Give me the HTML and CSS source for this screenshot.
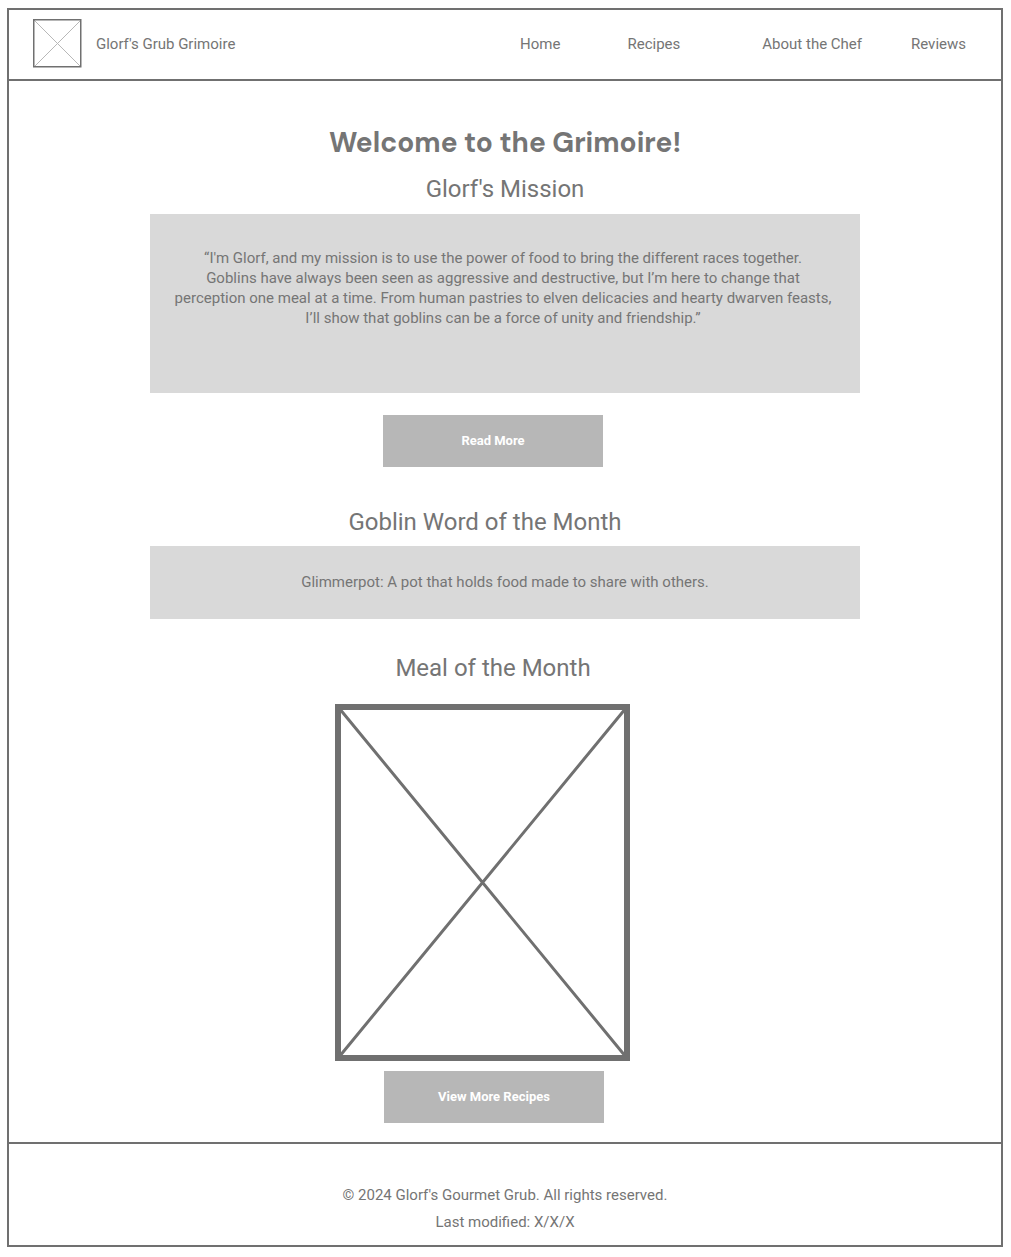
FILE: index.html
```html
<!DOCTYPE html>
<html lang="en">
<head>
<meta charset="utf-8">
<meta name="viewport" content="width=device-width, initial-scale=1">
<title>Glorf's Grub Grimoire</title>
<link rel="stylesheet" href="styles.css">
</head>
<body>
<div class="page">
  <header class="site-header">
    <svg class="logo" viewBox="0 0 49 49" aria-hidden="true">
      <path d="M1 1L48 48M48 1L1 48" stroke="#b8b8b8" fill="none"/>
      <rect x="0.75" y="0.75" width="47" height="47" fill="none" stroke="#707070" stroke-width="1.5"/>
    </svg>
    <span class="brand">Glorf's Grub Grimoire</span>
    <nav class="nav">
      <a class="nav-home" href="#">Home</a>
      <a class="nav-recipes" href="#">Recipes</a>
      <a class="nav-about" href="#">About the Chef</a>
      <a href="#">Reviews</a>
    </nav>
  </header>
  <main class="content">
    <h1>Welcome to the Grimoire!</h1>
    <section class="section">
      <h2>Glorf's Mission</h2>
      <div class="panel panel-mission">
        <p>“I'm Glorf, and my mission is to use the power of food to bring the different races together.<br>Goblins have always been seen as aggressive and destructive, but I’m here to change that<br>perception one meal at a time. From human pastries to elven delicacies and hearty dwarven feasts,<br>I’ll show that goblins can be a force of unity and friendship.”</p>
      </div>
      <button class="button button-mission" type="button">Read More</button>
    </section>
    <section class="section section-word">
      <h2 class="heading-word">Goblin Word of the Month</h2>
      <div class="panel panel-word">
        <p>Glimmerpot: A pot that holds food made to share with others.</p>
      </div>
    </section>
    <section class="section section-meal">
      <h2 class="heading-meal">Meal of the Month</h2>
      <svg class="meal-picture" viewBox="0 0 295 357" role="img" aria-label="Meal of the month">
        <path d="M4 4L291 353M291 4L4 353" stroke="#707070" stroke-width="3" fill="none"/>
        <rect x="3" y="3" width="289" height="351" fill="none" stroke="#707070" stroke-width="6"/>
      </svg>
      <button class="button button-meal" type="button">View More Recipes</button>
    </section>
  </main>
  <footer class="site-footer">
    <p>© 2024 Glorf's Gourmet Grub. All rights reserved.</p>
    <p>Last modified: X/X/X</p>
  </footer>
</div>
</body>
</html>
```
FILE: styles.css
```css
* {
  box-sizing: border-box;
}

body {
  margin: 8px 8px 10px 7px;
  background: #fff;
  color: #757575;
  font: 15px/20px Roboto, sans-serif;
}

h1, h2, p {
  margin: 0;
}

.page {
  border: 2px solid #707070;
}

.site-header {
  display: flex;
  align-items: center;
  padding: 9px 35px 11px 24px;
  border-bottom: 2px solid #707070;
}

.logo {
  width: 49px;
  height: 49px;
  flex: none;
}

.brand {
  margin-left: 14px;
}

.nav {
  display: flex;
  margin-left: auto;
}

.nav a {
  color: inherit;
  text-decoration: none;
}

.nav .nav-home {
  margin-right: 67px;
}

.nav .nav-recipes {
  margin-right: 82px;
}

.nav .nav-about {
  margin-right: 49px;
}

.content {
  display: flex;
  flex-direction: column;
  align-items: center;
  padding: 44px 16px 19px;
}

h1 {
  font: 700 28px/36px "DM Sans", Inter, sans-serif;
}

.section {
  display: flex;
  flex-direction: column;
  align-items: center;
  width: 100%;
  max-width: 710px;
  margin-top: 14px;
}

h2 {
  font-weight: 400;
  font-size: 24px;
  line-height: 28px;
}

.panel {
  width: 100%;
  background: #d9d9d9;
  text-align: center;
}

.panel-mission {
  margin-top: 11px;
  padding: 34px 24px 65px 20px;
}

.button {
  width: 220px;
  height: 52px;
  padding: 0;
  border: 0;
  background: #b7b7b7;
  color: #fff;
  font: 700 13px/20px Roboto, sans-serif;
}

.button-mission {
  margin: 22px 24px 0 0;
}

.section-word {
  margin-top: 41px;
}

.heading-word {
  margin-right: 40px;
}

.panel-word {
  margin-top: 10px;
  padding: 26px 24px 27px;
}

.section-meal {
  margin-top: 35px;
}

.heading-meal {
  margin-right: 24px;
}

.meal-picture {
  width: 295px;
  height: 357px;
  margin: 22px 45px 0 0;
}

.button-meal {
  margin: 10px 22px 0 0;
}

.site-footer {
  padding: 41px 16px 13px;
  border-top: 2px solid #707070;
  text-align: center;
}

.site-footer p + p {
  margin-top: 7px;
}
```
